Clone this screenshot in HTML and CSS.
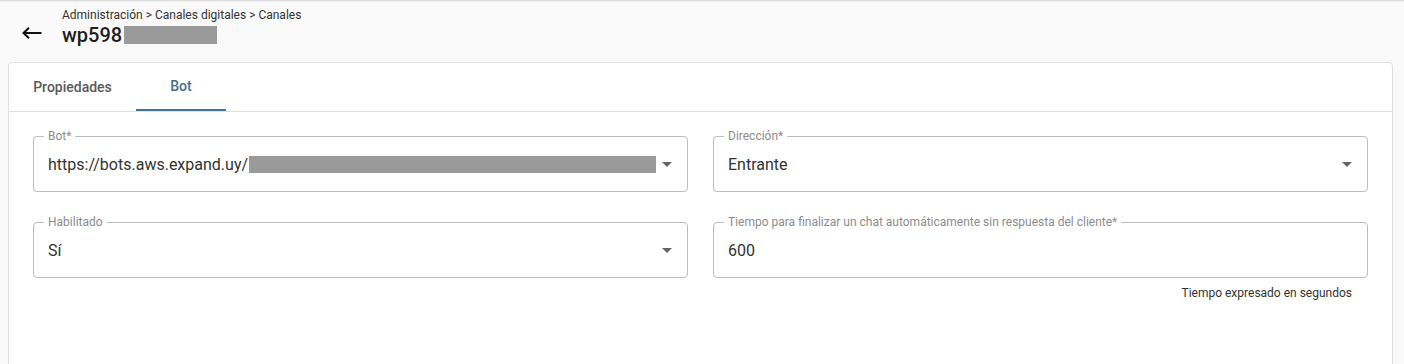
FILE: index.html
```html
<!DOCTYPE html>
<html>

<head>
	<meta charset="utf-8">
	<title>Canales</title>
	<link rel="stylesheet" href="styles.css">
</head>

<body>
	<div class="header">
		<a class="back" href="#">
			<svg width="20" height="12" viewBox="0 0 20 12">
				<path d="M1.5 6H19.5M7 0.8L1.5 6L7 11.2" fill="none" stroke="#111" stroke-width="2"/>
			</svg>
		</a>
		<div class="titles">
			<div class="crumbs">Administración &gt; Canales digitales &gt; Canales</div>
			<div class="title">wp598<span class="hidden hidden-title"></span></div>
		</div>
	</div>

	<div class="card">
		<div class="tabs">
			<div class="tab tab-first">Propiedades</div>
			<div class="tab active">Bot</div>
		</div>

		<div class="form">
			<div class="cell">
				<div class="field">
					<span class="label">Bot*</span>
					<div class="value">https://bots.aws.expand.uy/<span class="hidden hidden-url"></span></div>
					<span class="caret"></span>
				</div>
			</div>
			<div class="cell">
				<div class="field">
					<span class="label">Dirección*</span>
					<div class="value">Entrante</div>
					<span class="caret"></span>
				</div>
			</div>
			<div class="cell">
				<div class="field">
					<span class="label">Habilitado</span>
					<div class="value">Sí</div>
					<span class="caret"></span>
				</div>
			</div>
			<div class="cell">
				<div class="field">
					<span class="label">Tiempo para finalizar un chat automáticamente sin respuesta del cliente*</span>
					<div class="value">600</div>
				</div>
				<div class="helper">Tiempo expresado en segundos</div>
			</div>
		</div>
	</div>
</body>

</html>
```

FILE: styles.css
```css
* {
	margin: 0;
	padding: 0;
	box-sizing: border-box;
}

body {
	background: #f9f9f9;
	font-family: Roboto, "Liberation Sans", sans-serif;
	color: #333;
	overflow: hidden;
	box-shadow: inset 0 1px 0 #dedede, inset 0 2px 0 #efefef;
}

/* cabecera con migas */
.header {
	height: 62px;
	display: flex;
	padding: 8px 0 0 22px;
}

.back {
	display: block;
	width: 20px;
	height: 12px;
	margin: 19px 20px 0 0;
}

.back svg {
	display: block;
}

.crumbs {
	font-size: 12px;
	line-height: 14px;
	color: #333;
}

.title {
	display: flex;
	align-items: center;
	margin-top: 1px;
	font-size: 20px;
	line-height: 24px;
	font-weight: 500;
	color: #1e1e1e;
}

.hidden {
	display: inline-block;
	background: #9a9a9a;
}

.hidden-title {
	width: 93px;
	height: 18px;
	margin-left: 2px;
}

.card {
	margin: 0 11px 0 8px;
	min-height: 320px;
	background: #fff;
	border: 1px solid #e0e0e0;
	border-radius: 4px;
}

/* pestañas */
.tabs {
	display: flex;
	height: 49px;
	border-bottom: 1px solid #e0e0e0;
}

.tab {
	height: 48px;
	line-height: 48px;
	text-align: center;
	font-size: 14px;
	font-weight: 500;
	color: #5a5a5a;
}

.tab-first {
	width: 127px;
}

.tab.active {
	width: 90px;
	color: #41718e;
	border-bottom: 2px solid #45738f;
	line-height: 46px;
}

/* formulario */
.form {
	display: grid;
	grid-template-columns: 1fr 1fr;
	column-gap: 25px;
	row-gap: 30px;
	padding: 24px 24px;
}

.field {
	position: relative;
	height: 56px;
	display: flex;
	align-items: center;
	padding: 0 15px 0 14px;
	border: 1px solid #bdbdbd;
	border-radius: 4px;
}

.label {
	position: absolute;
	left: 10px;
	top: -8px;
	padding: 0 4px;
	background: #fff;
	font-size: 12px;
	line-height: 14px;
	color: #8c8c8c;
	white-space: nowrap;
}

.value {
	flex: 1;
	display: flex;
	align-items: center;
	font-size: 16px;
	color: #333;
	white-space: nowrap;
}

.hidden-url {
	width: 407px;
	height: 17px;
	margin-left: 1px;
}

.caret {
	width: 0;
	height: 0;
	margin-top: 1px;
	border-left: 5px solid transparent;
	border-right: 5px solid transparent;
	border-top: 5px solid #666;
}

.helper {
	margin: 6px 16px 0 0;
	font-size: 12px;
	line-height: 19px;
	text-align: right;
	color: #333;
}
```
